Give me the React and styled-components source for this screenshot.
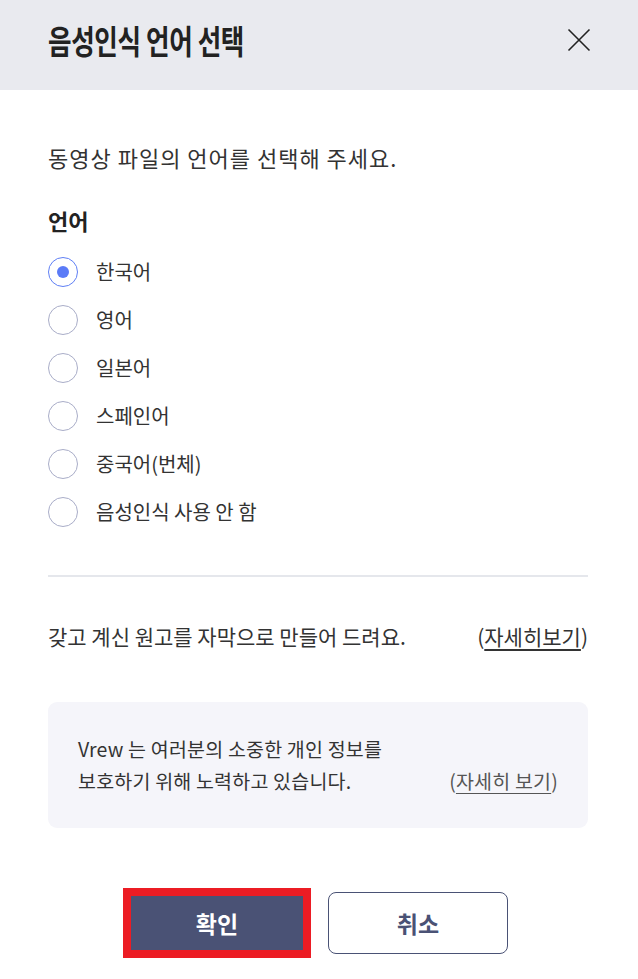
import React, { useState } from 'react';
import styled, { createGlobalStyle } from 'styled-components';

const GlobalStyle = createGlobalStyle`
  html, body {
    margin: 0;
    padding: 0;
    background: #ffffff;
  }
  body {
    font-family: 'Noto Sans CJK KR', 'Noto Sans', sans-serif;
    color: #222;
  }
`;

const Dialog = styled.div`
  width: 638px;
  min-height: 979px;
  background: #fff;
  display: flex;
  flex-direction: column;
`;

const Header = styled.header`
  height: 90px;
  box-sizing: border-box;
  background: #e9eaef;
  padding: 0 47px 10px 48px;
  display: flex;
  align-items: center;
  justify-content: space-between;
`;

const Title = styled.h1`
  margin: 0;
  font-size: 33px;
  font-weight: 700;
  color: #222;
  line-height: 40px;
  letter-spacing: -0.5px;
  display: inline-block;
  transform: scaleX(0.775);
  transform-origin: left center;
  white-space: nowrap;
`;

const CloseButton = styled.button`
  width: 24px;
  height: 24px;
  padding: 0;
  border: 0;
  background: transparent;
  cursor: pointer;
  display: flex;
  align-items: center;
  justify-content: center;
`;

const Body = styled.div`
  padding: 52px 50px 0 48px;
  display: flex;
  flex-direction: column;
`;

const Lead = styled.p`
  margin: 0;
  font-size: 22px;
  line-height: 30px;
  color: #333;
  letter-spacing: 1px;
`;

const SectionLabel = styled.h2`
  margin: 33px 0 13px;
  font-size: 22px;
  line-height: 30px;
  font-weight: 700;
  color: #222;
`;

const RadioList = styled.div`
  display: flex;
  flex-direction: column;
`;

const RadioRow = styled.label`
  height: 48px;
  display: flex;
  align-items: center;
  gap: 18px;
  cursor: pointer;
`;

const RadioCircle = styled.span`
  width: 30px;
  height: 30px;
  box-sizing: border-box;
  border-radius: 50%;
  border: 1px solid ${p => (p.$checked ? '#5f7ff5' : '#a9adc8')};
  display: flex;
  align-items: center;
  justify-content: center;
  flex-shrink: 0;

  &::after {
    content: '';
    width: 12px;
    height: 12px;
    border-radius: 50%;
    background: #5b7bf7;
    display: ${p => (p.$checked ? 'block' : 'none')};
  }
`;

const RadioText = styled.span`
  font-size: 20px;
  line-height: 30px;
  color: #333;
`;

const Divider = styled.hr`
  margin: 39px 0 0;
  border: 0;
  height: 2px;
  background: #e5e7ec;
`;

const InfoRow = styled.div`
  margin-top: 44px;
  display: flex;
  justify-content: space-between;
  align-items: center;
  font-size: 21px;
  line-height: 30px;
  color: #333;
`;

const Link = styled.a`
  color: ${p => (p.$muted ? '#555' : '#333')};
  text-decoration: none;
  cursor: pointer;
  white-space: nowrap;

  span {
    text-decoration: underline;
    text-underline-offset: 4px;
  }
`;

const Notice = styled.div`
  margin-top: 51px;
  background: #f5f5fa;
  border-radius: 9px;
  padding: 31px 30px;
  display: flex;
  justify-content: space-between;
  align-items: flex-end;
  font-size: 19.5px;
  line-height: 32px;
  color: #333;
  letter-spacing: 0.2px;
`;

const NoticeText = styled.p`
  margin: 0;
`;

const Actions = styled.div`
  margin-top: 64px;
  display: flex;
  justify-content: center;
  gap: 21px;
  padding-right: 1px;
`;

const Button = styled.button`
  width: 180px;
  height: 62px;
  box-sizing: border-box;
  border-radius: ${p => (p.$focused ? '0' : '8px')};
  font-family: inherit;
  font-size: 23px;
  font-weight: 700;
  cursor: pointer;
  border: 1px solid #4a5275;
  background: ${p => (p.$primary ? '#4a5275' : '#fff')};
  color: ${p => (p.$primary ? '#fff' : '#4a5275')};
  outline: ${p => (p.$focused ? '8px solid #ec1c24' : 'none')};
  outline-offset: -4px;
`;

const languages = ['한국어', '영어', '일본어', '스페인어', '중국어(번체)', '음성인식 사용 안 함'];

function CloseIcon() {
  return (
    <svg width="24" height="24" viewBox="0 0 24 24" fill="none">
      <path d="M1.5 1.5 L22.5 22.5 M22.5 1.5 L1.5 22.5" stroke="#222" strokeWidth="1.6" />
    </svg>
  );
}

export default function App() {
  const [selected, setSelected] = useState(0);

  return (
    <>
      <GlobalStyle />
      <Dialog>
        <Header>
          <Title>음성인식 언어 선택</Title>
          <CloseButton aria-label="닫기">
            <CloseIcon />
          </CloseButton>
        </Header>
        <Body>
          <Lead>동영상 파일의 언어를 선택해 주세요.</Lead>
          <SectionLabel>언어</SectionLabel>
          <RadioList>
            {languages.map((lang, i) => (
              <RadioRow key={lang} onClick={() => setSelected(i)}>
                <RadioCircle $checked={selected === i} />
                <RadioText>{lang}</RadioText>
              </RadioRow>
            ))}
          </RadioList>
          <Divider />
          <InfoRow>
            <span>갖고 계신 원고를 자막으로 만들어 드려요.</span>
            <Link>(<span>자세히보기</span>)</Link>
          </InfoRow>
          <Notice>
            <NoticeText>
              Vrew 는 여러분의 소중한 개인 정보를
              <br />
              보호하기 위해 노력하고 있습니다.
            </NoticeText>
            <Link $muted>(<span>자세히 보기</span>)</Link>
          </Notice>
          <Actions>
            <Button $primary $focused>확인</Button>
            <Button>취소</Button>
          </Actions>
        </Body>
      </Dialog>
    </>
  );
}
